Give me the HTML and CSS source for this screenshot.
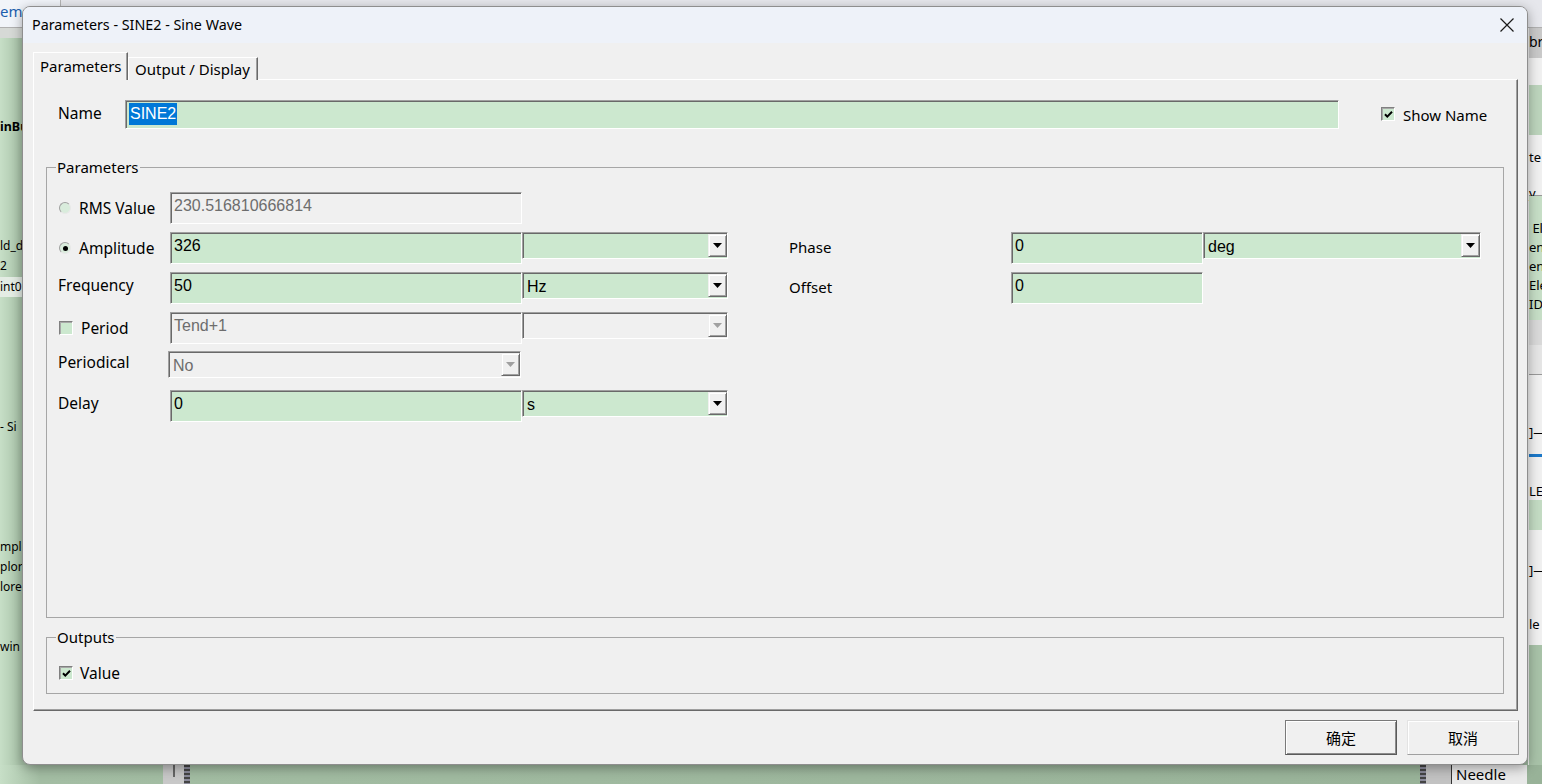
FILE: index.html
```html
<!DOCTYPE html>
<html lang="en">
<head>
  <meta charset="UTF-8">
  <title>Parameters - SINE2 - Sine Wave</title>
  <link rel="stylesheet" href="styles.css">
</head>
<body>

<div class="app">
  <div class="app-top">
    <span class="app-tab">em</span>
    <span class="app-doc"></span>
  </div>
  <div class="app-main">
    <div class="side-left">
      <div class="band"></div>
      <div class="ln l-inbu">inBu</div>
      <div class="ln l-ldd">ld_d</div>
      <div class="ln">2</div>
      <div class="ln l-int0">int0</div>
      <div class="ln l-si">- Si</div>
      <div class="ln l-mplo">mplo</div>
      <div class="ln">plor</div>
      <div class="ln">lore</div>
      <div class="ln l-win">win</div>
    </div>
    <div class="app-center"></div>
    <div class="side-right">
      <div class="r-gray">br</div>
      <div class="r-light"></div>
      <div class="r-green"></div>
      <div class="r-props"><div class="ln">te</div><div class="ln r-y">y</div></div>
      <div class="r-list">
        <div class="ln">&nbsp;El</div>
        <div class="ln">en</div>
        <div class="ln">en</div>
        <div class="ln">Ele</div>
        <div class="ln">ID</div>
      </div>
      <div class="r-bar1"></div>
      <div class="r-bar2"></div>
      <div class="r-canvas"><div class="ln r-node">]—</div></div>
      <div class="r-blue"></div>
      <div class="r-canvas2"><div class="ln r-le">LE</div></div>
      <div class="r-green2"></div>
      <div class="r-canvas3"><div class="ln r-node2">]—</div><div class="ln r-lee">le</div></div>
      <div class="r-rest"></div>
    </div>
  </div>
  <div class="app-bottom">
    <span class="scroll"><span class="thumb"></span></span>
    <span class="grip"></span>
    <span class="fill"></span>
    <span class="grip"></span>
    <span class="cellgap"></span>
    <span class="needle">Needle</span>
  </div>
</div>

<div class="dialog">
  <div class="titlebar">
    <span class="title">Parameters - SINE2 - Sine Wave</span>
    <svg class="close" width="14" height="14" viewBox="0 0 14 14">
      <path d="M0.5 0.5L13.5 13.5M13.5 0.5L0.5 13.5" stroke="#1a1a1a" stroke-width="1.2" fill="none"/>
    </svg>
  </div>

  <div class="dlg-body">
    <div class="tabs">
      <div class="tab active">Parameters</div>
      <div class="tab">Output / Display</div>
    </div>

    <div class="panel">
      <div class="name-row">
        <span class="lbl name-lbl">Name</span>
        <div class="field name-field"><span class="sel">SINE2</span></div>
        <span class="check on show-check">
          <svg width="11" height="11" viewBox="0 0 11 11"><path d="M2 5.2L4.3 7.6L9 2.8" stroke="#000" stroke-width="2" fill="none"/></svg>
        </span>
        <span class="lbl small">Show Name</span>
      </div>

      <fieldset class="group params">
        <legend>Parameters</legend>

        <div class="row">
          <span class="lbl opt"><span class="radio"></span>RMS Value</span>
          <div class="field disabled">230.516810666814</div>
        </div>

        <div class="row">
          <span class="lbl opt"><span class="radio on"></span>Amplitude</span>
          <div class="field">326</div>
          <div class="combo"><span class="val"></span><span class="drop"><svg width="9" height="5" viewBox="0 0 9 5"><path d="M0 0H9L4.5 5Z"/></svg></span></div>
          <span class="gap"></span>
          <span class="lbl wide small">Phase</span>
          <div class="field short">0</div>
          <div class="combo long"><span class="val">deg</span><span class="drop"><svg width="9" height="5" viewBox="0 0 9 5"><path d="M0 0H9L4.5 5Z"/></svg></span></div>
        </div>

        <div class="row">
          <span class="lbl up">Frequency</span>
          <div class="field">50</div>
          <div class="combo"><span class="val">Hz</span><span class="drop"><svg width="9" height="5" viewBox="0 0 9 5"><path d="M0 0H9L4.5 5Z"/></svg></span></div>
          <span class="gap"></span>
          <span class="lbl wide small">Offset</span>
          <div class="field short">0</div>
        </div>

        <div class="row">
          <span class="lbl opt"><span class="check"></span>Period</span>
          <div class="field disabled">Tend+1</div>
          <div class="combo disabled"><span class="val"></span><span class="drop"><svg width="9" height="5" viewBox="0 0 9 5"><path d="M0 0H9L4.5 5Z"/></svg></span></div>
        </div>

        <div class="row row-periodical">
          <span class="lbl">Periodical</span>
          <div class="combo disabled wide-combo"><span class="val">No</span><span class="drop"><svg width="9" height="5" viewBox="0 0 9 5"><path d="M0 0H9L4.5 5Z"/></svg></span></div>
        </div>

        <div class="row">
          <span class="lbl up">Delay</span>
          <div class="field">0</div>
          <div class="combo"><span class="val">s</span><span class="drop"><svg width="9" height="5" viewBox="0 0 9 5"><path d="M0 0H9L4.5 5Z"/></svg></span></div>
        </div>
      </fieldset>

      <fieldset class="group outputs">
        <legend>Outputs</legend>
        <div class="out-row">
          <span class="check on">
            <svg width="11" height="11" viewBox="0 0 11 11"><path d="M2 5.2L4.3 7.6L9 2.8" stroke="#000" stroke-width="2" fill="none"/></svg>
          </span>
          <span class="lbl-text">Value</span>
        </div>
      </fieldset>
    </div>

    <div class="buttons">
      <button class="btn default">确定</button>
      <button class="btn">取消</button>
    </div>
  </div>
</div>

</body>
</html>
```

FILE: styles.css
```css
* {
  box-sizing: border-box;
}

body {
  margin: 0;
  width: 1542px;
  height: 784px;
  overflow: hidden;
  position: relative;
  font-family: "Noto Sans", sans-serif;
  background: #9db69d;
}

/* ---- application behind the dialog ---- */

.app {
  display: flex;
  flex-direction: column;
  height: 784px;
}

.app-top {
  height: 28px;
  display: flex;
  background: #f1f4f9;
  border-bottom: 1px solid #b0b0b0;
}

.app-tab {
  width: 60px;
  color: #1d5fae;
  font-size: 15px;
  line-height: 22px;
}

.app-doc {
  flex: 1;
  background: #e6e7ec;
  border-left: 1px solid #b4b4b4;
}

.app-main {
  flex: 1;
  display: flex;
}

.ln {
  height: 20px;
  line-height: 20px;
  font-size: 12px;
  white-space: nowrap;
  color: #000;
}

.side-left {
  width: 60px;
  overflow: hidden;
  background: linear-gradient(to right, #c7dfc7, #a9c3a9 20px, #a0baa0 60px);
}

.side-left .band {
  height: 10px;
  background: #d6d9d6;
}

.l-inbu { margin-top: 79px; font-weight: bold; font-size: 12.5px; }
.l-ldd { margin-top: 99px; }
.l-int0 { margin-top: 1px; background: #e4ece4; }
.l-si { margin-top: 120px; }
.l-mplo { margin-top: 100px; }
.l-win { margin-top: 40px; }

.app-center {
  flex: 1;
}

.side-right {
  width: 14px;
  padding-left: 1px;
  overflow: hidden;
  display: flex;
  flex-direction: column;
  background: #f0f0f0;
}

.side-right .ln {
  font-size: 13px;
}

.r-gray { height: 30px; line-height: 28px; font-size: 14px; background: #c9c9c9; }
.r-light { height: 27px; }
.r-green { height: 50px; background: #bcd4bc; }
.r-props { height: 61px; padding-top: 12px; border-bottom: 1px solid #999; }
.r-props .r-y { margin-top: 16px; }
.r-list { height: 124px; padding-top: 23px; background: #c6dec6; }
.r-list .ln { height: 19px; line-height: 19px; }
.r-bar1 { height: 25px; background: #d9d9d9; }
.r-bar2 { height: 30px; background: #e5e5e5; border-bottom: 1px solid #999; }
.r-canvas { height: 79px; padding-top: 47px; }
.r-blue { height: 3px; background: #1c78c8; }
.r-canvas2 { height: 43px; padding-top: 24px; }
.r-green2 { height: 30px; background: #c3dbc3; }
.r-canvas3 { height: 115px; padding-top: 30px; }
.r-canvas3 .r-lee { margin-top: 34px; }
.r-rest { flex: 1; background: #a8c2a8; }

.app-bottom {
  height: 19px;
  display: flex;
  background: linear-gradient(to right, #c7dfc7, #a3bda3 40px, #98b298);
}

.scroll {
  width: 21px;
  margin-left: 163px;
  background: #c8c8c8;
  padding-left: 10px;
}

.scroll .thumb {
  display: block;
  width: 2px;
  height: 12px;
  background: #666;
}

.grip {
  width: 6px;
  background: repeating-linear-gradient(#444 0 2px, #8a8a9a 2px 4px);
}

.fill {
  width: 1230px;
}

.cellgap {
  width: 25px;
  background: #c2c2c2;
}

.needle {
  width: 76px;
  border-left: 1px solid #333;
  background: #e9e9e9;
  font-size: 15px;
  line-height: 19px;
  padding-left: 4px;
}

/* ---- dialog ---- */

.dialog {
  position: absolute;
  left: 22px;
  top: 6px;
  width: 1506px;
  height: 759px;
  display: flex;
  flex-direction: column;
  background: #f0f0f0;
  border: 1px solid #8e8e8e;
  border-radius: 8px;
  overflow: hidden;
  box-shadow: 0 3px 12px rgba(0, 0, 0, 0.35);
}

.titlebar {
  height: 36px;
  display: flex;
  align-items: center;
  justify-content: space-between;
  padding: 0 13px 0 9px;
  background: #eef2f9;
}

.title {
  font-size: 14.3px;
  color: #000;
  margin-top: -1px;
}

.dlg-body {
  flex: 1;
  display: flex;
  flex-direction: column;
  padding: 9px 9px 0 10px;
}

.tabs {
  height: 28px;
  margin-bottom: -1px;
  display: flex;
  align-items: flex-end;
  position: relative;
  z-index: 1;
}

.tab {
  height: 23px;
  width: 130px;
  padding-left: 6px;
  font-size: 15px;
  line-height: 22px;
  background: #f0f0f0;
  border-top: 1px solid #fff;
  border-left: 1px solid #fff;
  border-right: 1px solid #696969;
  box-shadow: inset -1px 0 #a0a0a0;
}

.tab.active {
  height: 28px;
  width: 95px;
  line-height: 26px;
}

.panel {
  height: 632px;
  padding: 20px 13px 0 12px;
  border-top: 1px solid #fff;
  border-left: 1px solid #fff;
  border-right: 1px solid #696969;
  border-bottom: 1px solid #696969;
  box-shadow: inset -1px -1px #a0a0a0;
}

.lbl {
  font-size: 15.5px;
  line-height: 20px;
  color: #000;
  white-space: nowrap;
}

.lbl.small {
  font-size: 15px;
}

.name-row {
  height: 29px;
  display: flex;
  align-items: center;
  padding-left: 12px;
}

.name-lbl {
  width: 67px;
  margin-top: -4px;
}

.field {
  width: 352px;
  height: 32px;
  flex: none;
  padding: 3px 0 0 3px;
  font-family: "Liberation Sans", Arial, sans-serif;
  font-size: 16px;
  line-height: 20px;
  color: #000;
  background: #cce8cf;
  border: 1px solid;
  border-color: #a0a0a0 #fff #fff #a0a0a0;
  box-shadow: inset 1px 1px #696969;
}

.field.disabled {
  background: #f0f0f0;
  color: #6d6d6d;
}

.name-field {
  width: 1214px;
  height: 29px;
  padding-top: 2px;
}

.sel {
  display: inline-block;
  background: #0078d7;
  color: #fff;
  line-height: 22px;
  padding: 0 1px;
}

.show-check {
  margin-left: 42px;
  margin-right: 8px;
  margin-top: -1px;
}

.check {
  width: 14px;
  height: 14px;
  flex: none;
  display: inline-flex;
  align-items: center;
  justify-content: center;
  background: #cce8cf;
  border: 1px solid;
  border-color: #808080 #fff #fff #808080;
  box-shadow: inset 1px 1px #a8a8a8;
}

.radio {
  width: 12px;
  height: 12px;
  flex: none;
  display: inline-flex;
  align-items: center;
  justify-content: center;
  border-radius: 50%;
  border: 1px solid #a0a0a0;
  border-right-color: #e8e8e8;
  border-bottom-color: #e8e8e8;
  background: #d9ecdc;
}

.radio.on::after {
  content: "";
  width: 5px;
  height: 5px;
  border-radius: 50%;
  background: #000;
}

.group {
  margin: 0;
  padding: 15px 0 0 11px;
  border: 1px solid #a6a6a6;
}

.group legend {
  font-size: 15px;
  line-height: 20px;
  padding: 0 1px;
  margin-left: -2px;
}

.params {
  margin-top: 28px;
  height: 461px;
}

.outputs {
  margin-top: 9px;
  height: 67px;
  padding-top: 16px;
}

.row {
  height: 32px;
  display: flex;
  align-items: flex-start;
  margin-bottom: 8px;
}

.row .lbl {
  width: 112px;
  flex: none;
  padding-top: 5px;
}

.row .lbl.up {
  padding-top: 3px;
}

.row .lbl.opt {
  display: flex;
  align-items: center;
  gap: 8px;
  padding-left: 1px;
  padding-top: 6px;
}

.row .lbl.wide {
  width: 222px;
}

.row-periodical {
  height: 31px;
  margin-top: -1px;
}

.row-periodical .lbl {
  width: 110px;
  padding-top: 1px;
}

.gap {
  width: 61px;
  flex: none;
}

.field.short {
  width: 192px;
}

.combo {
  width: 206px;
  height: 27px;
  flex: none;
  display: flex;
  align-items: center;
  background: #cce8cf;
  border: 1px solid;
  border-color: #a0a0a0 #fff #fff #a0a0a0;
  box-shadow: inset 1px 1px #696969;
  font-family: "Liberation Sans", Arial, sans-serif;
  font-size: 16px;
  color: #000;
}

.combo.long {
  width: 278px;
}

.combo.wide-combo {
  width: 353px;
}

.combo .val {
  flex: 1;
  padding: 2px 0 0 4px;
  line-height: 20px;
}

.combo .drop {
  width: 19px;
  height: 23px;
  display: flex;
  align-items: center;
  justify-content: center;
  background: #f0f0f0;
  border: 1px solid;
  border-color: #f0f0f0 #696969 #696969 #f0f0f0;
  box-shadow: inset 1px 1px #fff, inset -1px -1px #a0a0a0;
}

.combo .drop svg {
  fill: #000;
}

.combo.disabled {
  background: #f0f0f0;
  color: #6d6d6d;
}

.combo.disabled .drop svg {
  fill: #a0a0a0;
}

.out-row {
  display: flex;
  align-items: center;
  gap: 7px;
  height: 20px;
  padding-left: 1px;
}

.lbl-text {
  font-size: 15.5px;
  line-height: 20px;
}

.buttons {
  display: flex;
  justify-content: flex-end;
  gap: 10px;
  margin-top: 9px;
  margin-right: -1px;
}

.btn {
  width: 112px;
  height: 35px;
  padding: 0;
  font-family: "Noto Sans CJK SC", "Noto Sans", sans-serif;
  font-size: 15px;
  color: #000;
  background: #f0f0f0;
  border: 1px solid;
  border-color: #e3e3e3 #a0a0a0 #a0a0a0 #e3e3e3;
  box-shadow: inset 1px 1px #fff;
}

.btn.default {
  border-color: #7a7a7a #5a5a5a #5a5a5a #7a7a7a;
  box-shadow: inset 1px 1px #fff, inset -1px -1px #8c8c8c;
}
```
